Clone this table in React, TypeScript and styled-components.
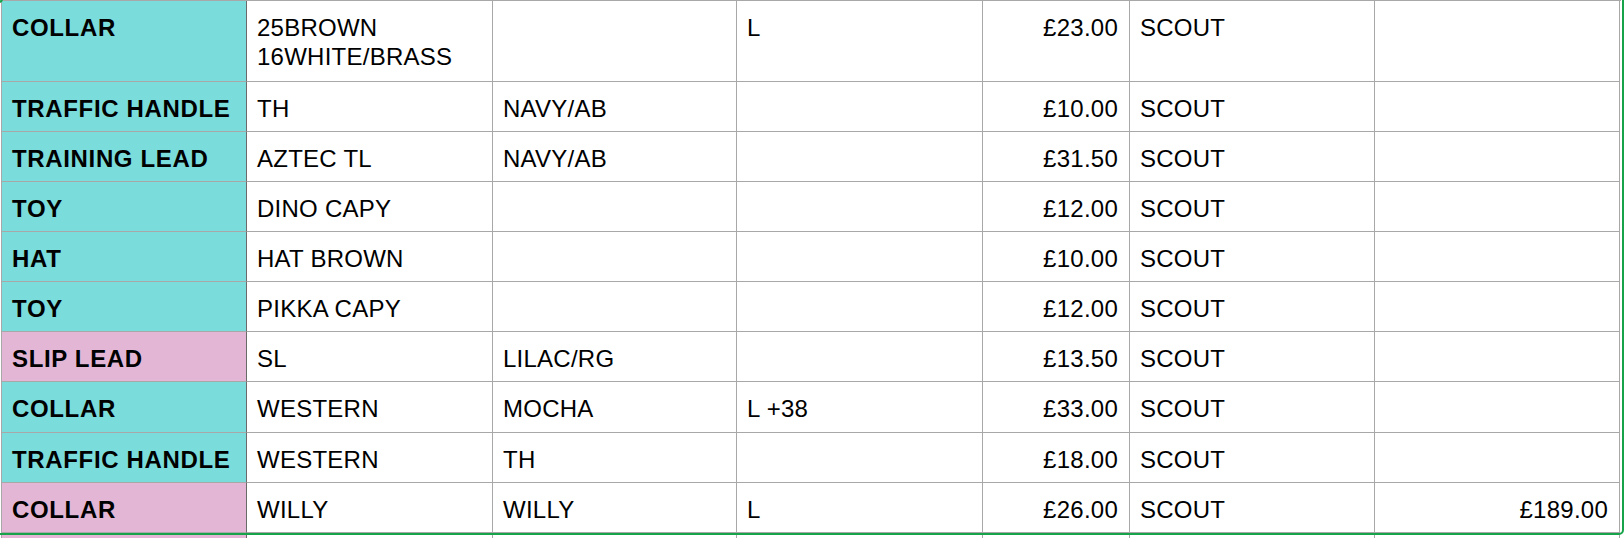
import React from "react";
import styled, { createGlobalStyle } from "styled-components";

type Tone = "teal" | "pink";

type Row = {
  item: string;
  code: string;
  colour: string;
  size: string;
  price: string;
  store: string;
  total: string;
  tone: Tone;
  height: number;
};

const rows: Row[] = [
  { item: "COLLAR", code: "25BROWN\n16WHITE/BRASS", colour: "", size: "L", price: "£23.00", store: "SCOUT", total: "", tone: "teal", height: 80 },
  { item: "TRAFFIC HANDLE", code: "TH", colour: "NAVY/AB", size: "", price: "£10.00", store: "SCOUT", total: "", tone: "teal", height: 49 },
  { item: "TRAINING LEAD", code: "AZTEC TL", colour: "NAVY/AB", size: "", price: "£31.50", store: "SCOUT", total: "", tone: "teal", height: 49 },
  { item: "TOY", code: "DINO CAPY", colour: "", size: "", price: "£12.00", store: "SCOUT", total: "", tone: "teal", height: 49 },
  { item: "HAT", code: "HAT BROWN", colour: "", size: "", price: "£10.00", store: "SCOUT", total: "", tone: "teal", height: 49 },
  { item: "TOY", code: "PIKKA CAPY", colour: "", size: "", price: "£12.00", store: "SCOUT", total: "", tone: "teal", height: 49 },
  { item: "SLIP LEAD", code: "SL", colour: "LILAC/RG", size: "", price: "£13.50", store: "SCOUT", total: "", tone: "pink", height: 49 },
  { item: "COLLAR", code: "WESTERN", colour: "MOCHA", size: "L +38", price: "£33.00", store: "SCOUT", total: "", tone: "teal", height: 50 },
  { item: "TRAFFIC HANDLE", code: "WESTERN", colour: "TH", size: "", price: "£18.00", store: "SCOUT", total: "", tone: "teal", height: 49 },
  { item: "COLLAR", code: "WILLY", colour: "WILLY", size: "L", price: "£26.00", store: "SCOUT", total: "£189.00", tone: "pink", height: 49 },
];

const tones: Record<Tone, string> = {
  teal: "#7bdcdc",
  pink: "#e3b6d6",
};

const GlobalStyle = createGlobalStyle`
  html, body {
    margin: 0;
    padding: 0;
    background: #ffffff;
    overflow: hidden;
  }
  body {
    font-family: "Liberation Sans", Arial, Helvetica, sans-serif;
    color: #000000;
  }
`;

const Page = styled.div`
  position: relative;
  width: 1624px;
  height: 538px;
  overflow: hidden;
`;

const Sheet = styled.div`
  margin-left: 1px;
  width: 1619px;
  border-left: 1px solid #a8a8a8;
  border-top: 1px solid #a8a8a8;
  display: grid;
  grid-template-columns: 245px 246px 244px 246px 147px 245px 245px;
`;

const Cell = styled.div<{ $h: number; $align?: "left" | "right" }>`
  box-sizing: content-box;
  height: ${(p) => p.$h - 12}px;
  padding: 12px 11px 0 10px;
  border-right: 1px solid #a8a8a8;
  border-bottom: 1px solid #a8a8a8;
  font-size: 24px;
  line-height: 29px;
  letter-spacing: 0.25px;
  white-space: pre-line;
  text-align: ${(p) => p.$align ?? "left"};
  overflow: hidden;
  background: #ffffff;
`;

const ItemCell = styled(Cell)<{ $tone: Tone }>`
  background: ${(p) => tones[p.$tone]};
  font-weight: 700;
  letter-spacing: 0.65px;
  white-space: nowrap;
  border-right-color: #6a6a6a;
`;

const Selection = styled.div`
  position: absolute;
  left: -20px;
  top: -20px;
  right: 0;
  height: 555px;
  box-sizing: border-box;
  border: 2px solid #17a34a;
  border-radius: 5px;
  pointer-events: none;
`;

const CornerMark = styled.div`
  position: absolute;
  left: -3px;
  top: -3px;
  width: 6px;
  height: 6px;
  box-sizing: border-box;
  border-right: 2px solid #17a34a;
  border-bottom: 2px solid #17a34a;
  border-bottom-right-radius: 4px;
`;

const App = () => {
  return (
    <>
      <GlobalStyle />
      <Page>
        <Sheet>
          {rows.map((r, i) => (
            <React.Fragment key={i}>
              <ItemCell $h={r.height} $tone={r.tone}>{r.item}</ItemCell>
              <Cell $h={r.height}>{r.code}</Cell>
              <Cell $h={r.height}>{r.colour}</Cell>
              <Cell $h={r.height}>{r.size}</Cell>
              <Cell $h={r.height} $align="right">{r.price}</Cell>
              <Cell $h={r.height}>{r.store}</Cell>
              <Cell $h={r.height} $align="right">{r.total}</Cell>
            </React.Fragment>
          ))}
          <ItemCell $h={30} $tone="pink" />
          <Cell $h={30} />
          <Cell $h={30} />
          <Cell $h={30} />
          <Cell $h={30} />
          <Cell $h={30} />
          <Cell $h={30} />
        </Sheet>
        <Selection />
        <CornerMark />
      </Page>
    </>
  );
};

export default App;
